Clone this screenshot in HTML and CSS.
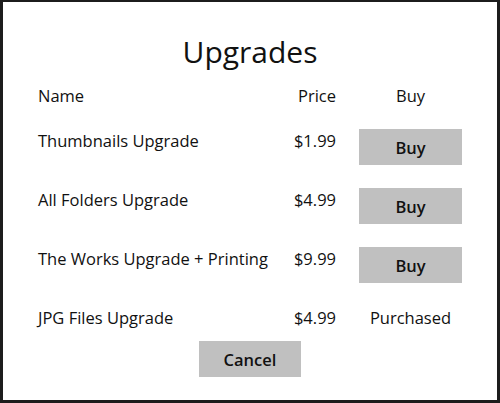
FILE: index.html
```
<!DOCTYPE html>
<html lang="en">
<head>
    <meta charset="UTF-8">
    <meta name="viewport" content="width=device-width, initial-scale=1.0">
    <title>Upgrades</title>
    <link rel="stylesheet" href="styles.css">
</head>
<body>
    <div class="dialog">
        <h1 class="title">Upgrades</h1>

        <div class="row head">
            <span class="name">Name</span>
            <span class="price">Price</span>
            <span class="buy">Buy</span>
        </div>

        <div class="row">
            <span class="name">Thumbnails Upgrade</span>
            <span class="price">$1.99</span>
            <button class="buy button">Buy</button>
        </div>
        <div class="row">
            <span class="name">All Folders Upgrade</span>
            <span class="price">$4.99</span>
            <button class="buy button">Buy</button>
        </div>
        <div class="row">
            <span class="name">The Works Upgrade + Printing</span>
            <span class="price">$9.99</span>
            <button class="buy button">Buy</button>
        </div>
        <div class="row last">
            <span class="name">JPG Files Upgrade</span>
            <span class="price">$4.99</span>
            <span class="buy">Purchased</span>
        </div>

        <div class="bottom">
            <button class="button cancel">Cancel</button>
        </div>
    </div>
</body>
</html>
```

FILE: styles.css
```
html {
    font-family: "Open Sans", "Noto Sans", sans-serif;
}

body {
    margin: 0;
    background-color: #ffffff;
    color: #111111;
}

.dialog {
    box-sizing: border-box;
    width: 500px;
    height: 403px;
    border-style: solid;
    border-color: #1c1c1c;
    border-width: 2px 3px 3px 3px;
    padding-top: 32px;
    display: flex;
    flex-direction: column;
}

.title {
    margin: 0;
    font-size: 30px;
    font-weight: 400;
    line-height: 36px;
    text-align: center;
    height: 50px;
}

.row {
    display: grid;
    grid-template-columns: 242px 56px 126px;
    align-items: start;
    padding-left: 35px;
    height: 59px;
    font-size: 16.5px;
    line-height: 20px;
}

.row.head {
    height: 45px;
}

.row.last {
    height: 35px;
}

.name {
    white-space: nowrap;
    margin-top: 2px;
}

.price {
    text-align: right;
    margin-top: 2px;
}

.buy {
    justify-self: end;
    width: 103px;
    text-align: center;
    margin-top: 2px;
}

.button {
    border: none;
    border-radius: 0;
    background-color: #c0c0c0;
    color: #111111;
    font-family: inherit;
    font-size: 16.5px;
    font-weight: 600;
    height: 36px;
    padding: 0;
}

.buy.button {
    margin-top: 0;
}

.bottom {
    display: flex;
    justify-content: center;
}

.cancel {
    width: 102px;
}
```
